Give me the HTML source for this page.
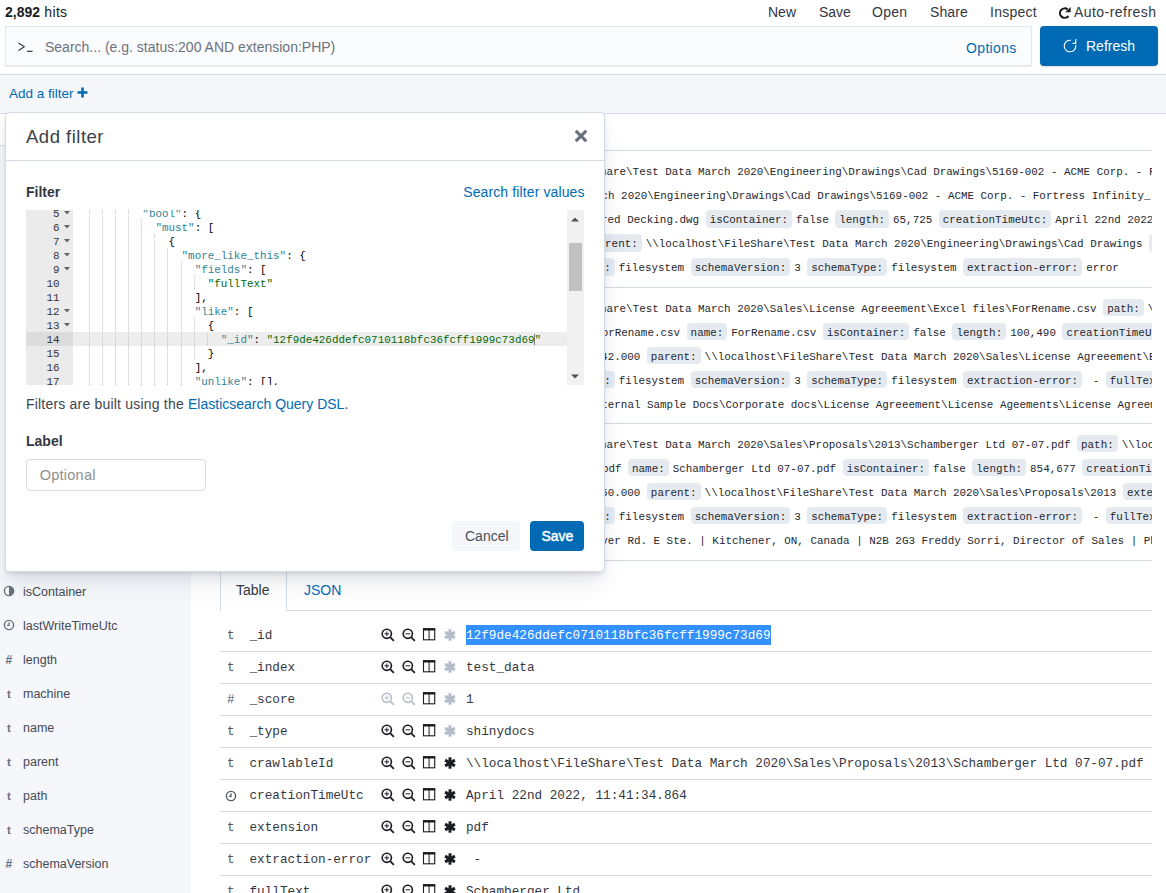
<!DOCTYPE html>
<html><head><meta charset="utf-8">
<style>
*{box-sizing:border-box;margin:0;padding:0}
html,body{width:1166px;height:893px;overflow:hidden;background:#fff}
body{font-family:"Liberation Sans",sans-serif;color:#343741;position:relative}
.abs{position:absolute}
.mono{font-family:"Liberation Mono",monospace}
.nw{white-space:nowrap}
.link{color:#006bb4}
/* top */
#hits{left:5px;top:2px;font-size:14px;line-height:20px;color:#1a1c21}
#menu span{position:absolute;top:2px;font-size:14px;line-height:20px;color:#343741}
#search{left:5px;top:26px;width:1027px;height:40px;background:#fbfcfd;border:1px solid #e2e6ee;box-shadow:0 1px 1px rgba(0,0,0,.06)}
#refresh{left:1040px;top:26px;width:118px;height:40px;background:#006bb4;border-radius:4px;box-shadow:0 1px 2px rgba(0,0,0,.15)}
#fband{left:0;top:74px;width:1166px;height:40px;background:#f5f7fa;border-top:1px solid #d3dae6;border-bottom:1px solid #d3dae6}
#sidebar{left:0;top:114px;width:191px;height:779px;background:#f5f7fa}
/* doc table */
#doctable{left:191px;top:113px;width:961px;height:448px;overflow:hidden}
.hl{position:absolute;left:0;height:1px;background:#d3dae6}
.dl{position:absolute;white-space:nowrap;font-family:"Liberation Mono",monospace;font-size:10.9px;line-height:24px;color:#25272e}
.dl b{font-weight:normal;background:#e5eaf1;padding:3.9px 4px 1.7px;margin-right:4px;border-radius:4px}
/* modal */
#modal{left:5px;top:112px;width:600px;height:460px;background:#fff;border:1px solid #d3dae6;border-radius:4px;box-shadow:0 14px 24px -4px rgba(65,78,101,.12),0 6px 10px -2px rgba(65,78,101,.1),0 2px 3px 0 rgba(65,78,101,.08)}
.ln{position:absolute;left:0;white-space:pre;font-family:"Liberation Mono",monospace;font-size:10.9px;line-height:14px;color:#000}
.ln .k{color:#318495}.ln .s{color:#036a07}
.gn{position:absolute;right:13.5px;font-family:"Liberation Mono",monospace;font-size:10.9px;line-height:14px;color:#333}
.fw{position:absolute;left:38px}
.guides i{position:absolute;width:1px;height:14px;background:repeating-linear-gradient(#c4c4c4 0 1px,transparent 1px 2px)}
.sf{position:absolute;left:23px;font-size:12.5px;line-height:16px;color:#454a55;white-space:nowrap}
.sic{position:absolute;font-family:"Liberation Sans",sans-serif;font-size:12px;line-height:16px;color:#69707d}
.dt{position:absolute;white-space:pre;font-family:"Liberation Mono",monospace;font-size:12.7px;line-height:20px;color:#343741}
</style></head>
<body>
<div id="hits" class="abs"><b>2,892</b><span style="letter-spacing:0.35px"> hits</span></div>
<div id="menu">
<span style="left:768px">New</span>
<span style="left:819px">Save</span>
<span style="left:872px;letter-spacing:0.3px">Open</span>
<span style="left:930px;letter-spacing:0.1px">Share</span>
<span style="left:990px;letter-spacing:0.25px">Inspect</span>
<span style="left:1074px;letter-spacing:0.45px">Auto-refresh</span>
<svg class="abs" style="left:1058px;top:5.5px" width="14" height="14" viewBox="0 0 14 14"><path d="M9.6 3.4 A4.7 4.7 0 1 0 10.4 10.0" fill="none" stroke="#1a1c21" stroke-width="2.1"/><path d="M12.6 0.9 L12.6 6.3 L7.2 6.3 Z" fill="#1a1c21"/></svg>
</div>
<div id="search" class="abs">
<svg class="abs" style="left:11px;top:15px" width="18" height="12" viewBox="0 0 18 12"><path d="M1.5 1 L7.3 4.8 L1.5 8.6" fill="none" stroke="#343741" stroke-width="1.15"/><path d="M10 9.3 H15.6" stroke="#343741" stroke-width="1.2"/></svg>
<div class="abs nw" style="left:39px;top:10px;font-size:14px;line-height:20px;color:#6c727d">Search... (e.g. status:200 AND extension:PHP)</div>
<div class="abs nw link" style="left:960px;top:11px;font-size:14px;line-height:20px;letter-spacing:0.35px">Options</div>
</div>
<div id="refresh" class="abs">
<svg class="abs" style="left:23px;top:12.3px" width="15" height="15" viewBox="0 0 15 15"><path d="M8.0 2.29 A5.8 5.8 0 1 0 12.71 6.99" fill="none" stroke="#fff" stroke-width="1.1"/><path d="M12.8 1 V5.4 H9.6" fill="none" stroke="#fff" stroke-width="1.1"/></svg>
<div class="abs nw" style="left:46px;top:10px;font-size:14px;line-height:20px;color:#fff">Refresh</div>
</div>
<div id="fband" class="abs">
<div class="abs nw link" style="left:9px;top:9.8px;font-size:13.5px;line-height:18px">Add a filter</div>
<svg class="abs" style="left:77px;top:12px" width="11" height="11" viewBox="0 0 11 11"><path d="M5.5 0.5 V10.5 M0.5 5.5 H10.5" stroke="#006bb4" stroke-width="2.6"/></svg>
</div>
<div id="sidebar" class="abs"><div class="abs" style="left:0;top:0;width:191px;height:32px;background:#fff;border-bottom:1px solid #d3dae6"></div><div class="sf" style="top:469.7px">isContainer</div><svg class="abs" style="left:3px;top:471.30000000000007px" width="12" height="12" viewBox="0 0 12 12"><circle cx="6" cy="6" r="4.6" fill="none" stroke="#69707d" stroke-width="1.4"/><path d="M6 1.4A4.6 4.6 0 0 1 6 10.6Z" fill="#69707d"/></svg><div class="sf" style="top:503.7px">lastWriteTimeUtc</div><svg class="abs" style="left:3px;top:505.30000000000007px" width="12" height="12" viewBox="0 0 12 12"><circle cx="6" cy="6" r="4.6" fill="none" stroke="#69707d" stroke-width="1.4"/><path d="M6 3.2V6.3H4" fill="none" stroke="#69707d" stroke-width="1.3"/></svg><div class="sf" style="top:537.7px">length</div><div class="sic" style="top:537.7px;left:5.5px;font-weight:bold">#</div><div class="sf" style="top:571.7px">machine</div><div class="sic" style="top:571.7px;left:7px;font-weight:bold;font-size:11.5px">t</div><div class="sf" style="top:605.7px">name</div><div class="sic" style="top:605.7px;left:7px;font-weight:bold;font-size:11.5px">t</div><div class="sf" style="top:639.7px">parent</div><div class="sic" style="top:639.7px;left:7px;font-weight:bold;font-size:11.5px">t</div><div class="sf" style="top:673.7px">path</div><div class="sic" style="top:673.7px;left:7px;font-weight:bold;font-size:11.5px">t</div><div class="sf" style="top:707.7px">schemaType</div><div class="sic" style="top:707.7px;left:7px;font-weight:bold;font-size:11.5px">t</div><div class="sf" style="top:741.7px">schemaVersion</div><div class="sic" style="top:741.7px;left:5.5px;font-weight:bold">#</div><div class="sf" style="top:775.7px">sourceId</div><div class="sic" style="top:775.7px;left:7px;font-weight:bold;font-size:11.5px">t</div></div>
<div id="doctable" class="abs"><div class="hl" style="left:29px;top:37px;width:932px"></div>
<div class="hl" style="left:29px;top:174px;width:932px"></div>
<div class="hl" style="left:29px;top:310px;width:932px"></div>
<div class="hl" style="left:29px;top:447px;width:932px"></div>
<div class="dl" style="left:408.95px;top:47.1px">hare\Test Data March 2020\Engineering\Drawings\Cad Drawings\5169-002 - ACME Corp. - Fortress Infinity_Weathered Decking.dwg</div>
<div class="dl" style="left:390.90px;top:71.1px">March 2020\Engineering\Drawings\Cad Drawings\5169-002 - ACME Corp. - Fortress Infinity_</div>
<div class="dl" style="left:410.05px;top:95.1px">red Decking.dwg <b>isContainer:</b>false <b>length:</b>65,725 <b>creationTimeUtc:</b>April 22nd 2022, 11:41:32.000</div>
<div class="dl" style="left:397.00px;top:119.1px"><b>parent:</b>\\localhost\FileShare\Test Data March 2020\Engineering\Drawings\Cad Drawings <b>extension:</b>dwg</div>
<div class="dl" style="left:363.50px;top:143.1px"><b>machine:</b>filesystem <b>schemaVersion:</b>3 <b>schemaType:</b>filesystem <b>extraction-error:</b>error</div>
<div class="dl" style="left:408.95px;top:183.8px">hare\Test Data March 2020\Sales\License Agreeement\Excel files\ForRename.csv <b>path:</b>\\localhost\FileShare</div>
<div class="dl" style="left:404.10px;top:207.8px">ForRename.csv <b>name:</b>ForRename.csv <b>isContainer:</b>false <b>length:</b>100,490 <b>creationTimeUtc:</b>April 22nd</div>
<div class="dl" style="left:370.90px;top:231.8px">11:41:42.000 <b>parent:</b>\\localhost\FileShare\Test Data March 2020\Sales\License Agreeement\Excel files</div>
<div class="dl" style="left:363.50px;top:255.8px"><b>machine:</b>filesystem <b>schemaVersion:</b>3 <b>schemaType:</b>filesystem <b>extraction-error:</b> - <b>fullText:</b>External</div>
<div class="dl" style="left:397.20px;top:279.8px">External Sample Docs\Corporate docs\License Agreeement\License Ageements\License Agreement.docx</div>
<div class="dl" style="left:408.95px;top:319.8px">hare\Test Data March 2020\Sales\Proposals\2013\Schamberger Ltd 07-07.pdf <b>path:</b>\\localhost\FileShare</div>
<div class="dl" style="left:371.70px;top:343.8px">07-07.pdf <b>name:</b>Schamberger Ltd 07-07.pdf <b>isContainer:</b>false <b>length:</b>854,677 <b>creationTimeUtc:</b>April</div>
<div class="dl" style="left:370.90px;top:367.8px">11:41:50.000 <b>parent:</b>\\localhost\FileShare\Test Data March 2020\Sales\Proposals\2013 <b>extension:</b>pdf</div>
<div class="dl" style="left:363.50px;top:391.8px"><b>machine:</b>filesystem <b>schemaVersion:</b>3 <b>schemaType:</b>filesystem <b>extraction-error:</b> - <b>fullText:</b>Schamberger</div>
<div class="dl" style="left:397.20px;top:415.8px">River Rd. E Ste. | Kitchener, ON, Canada | N2B 2G3 Freddy Sorri, Director of Sales | Phone: 519</div></div>
<div id="details"><div class="abs" style="left:220px;top:560px;width:67px;height:51px;border:1px solid #d3dae6;border-bottom:none;background:#fff"></div><div class="abs" style="left:286px;top:610px;width:866px;height:1px;background:#d3dae6"></div><div class="abs nw" style="left:236px;top:579.9px;font-size:14px;line-height:20px;color:#343741">Table</div><div class="abs nw link" style="left:304px;top:579.9px;font-size:14px;line-height:20px">JSON</div><div class="abs" style="left:220px;top:651px;width:932px;height:1px;background:#d3dae6"></div><div class="dt" style="left:227px;top:626.1px;color:#535966">t</div><div class="dt" style="left:249.5px;top:626.1px">_id</div><svg class="abs" style="left:381px;top:628.1px" width="14" height="14" viewBox="0 0 14 14"><circle cx="5.8" cy="5.8" r="4.6" fill="none" stroke="#1a1c21" stroke-width="1.6"/><path d="M9.2 9.2L12.8 12.8" stroke="#1a1c21" stroke-width="1.8"/><path d="M5.8 3.5V8.1M3.5 5.8H8.1" stroke="#1a1c21" stroke-width="1"/></svg><svg class="abs" style="left:401.5px;top:628.1px" width="14" height="14" viewBox="0 0 14 14"><circle cx="5.8" cy="5.8" r="4.6" fill="none" stroke="#1a1c21" stroke-width="1.6"/><path d="M9.2 9.2L12.8 12.8" stroke="#1a1c21" stroke-width="1.8"/><path d="M3.5 5.8H8.1" stroke="#1a1c21" stroke-width="1"/></svg><svg class="abs" style="left:422.3px;top:628.3000000000001px" width="14" height="13" viewBox="0 0 14 13"><rect x="1.5" y="1.2" width="11.2" height="10.6" fill="none" stroke="#1a1c21" stroke-width="1.1"/><path d="M0.95 1.3H13.25" stroke="#1a1c21" stroke-width="2.4"/><path d="M7.1 1V12" stroke="#1a1c21" stroke-width="1"/></svg><svg class="abs" style="left:443.5px;top:628.6px" width="12" height="12" viewBox="0 0 12 12"><g stroke="#b4bcc9" stroke-width="3" stroke-linecap="butt"><path d="M6 0.3V11.7"/><path d="M1.1 3.15L10.9 8.85"/><path d="M1.1 8.85L10.9 3.15"/></g></svg><div class="abs" style="left:466px;top:625px;width:305px;height:20px;background:#3390ff"></div><div class="dt" style="left:466px;top:626.1px;color:#fff">12f9de426ddefc0710118bfc36fcff1999c73d69</div><div class="abs" style="left:220px;top:683px;width:932px;height:1px;background:#d3dae6"></div><div class="dt" style="left:227px;top:658.1px;color:#535966">t</div><div class="dt" style="left:249.5px;top:658.1px">_index</div><svg class="abs" style="left:381px;top:660.1px" width="14" height="14" viewBox="0 0 14 14"><circle cx="5.8" cy="5.8" r="4.6" fill="none" stroke="#1a1c21" stroke-width="1.6"/><path d="M9.2 9.2L12.8 12.8" stroke="#1a1c21" stroke-width="1.8"/><path d="M5.8 3.5V8.1M3.5 5.8H8.1" stroke="#1a1c21" stroke-width="1"/></svg><svg class="abs" style="left:401.5px;top:660.1px" width="14" height="14" viewBox="0 0 14 14"><circle cx="5.8" cy="5.8" r="4.6" fill="none" stroke="#1a1c21" stroke-width="1.6"/><path d="M9.2 9.2L12.8 12.8" stroke="#1a1c21" stroke-width="1.8"/><path d="M3.5 5.8H8.1" stroke="#1a1c21" stroke-width="1"/></svg><svg class="abs" style="left:422.3px;top:660.3000000000001px" width="14" height="13" viewBox="0 0 14 13"><rect x="1.5" y="1.2" width="11.2" height="10.6" fill="none" stroke="#1a1c21" stroke-width="1.1"/><path d="M0.95 1.3H13.25" stroke="#1a1c21" stroke-width="2.4"/><path d="M7.1 1V12" stroke="#1a1c21" stroke-width="1"/></svg><svg class="abs" style="left:443.5px;top:660.6px" width="12" height="12" viewBox="0 0 12 12"><g stroke="#b4bcc9" stroke-width="3" stroke-linecap="butt"><path d="M6 0.3V11.7"/><path d="M1.1 3.15L10.9 8.85"/><path d="M1.1 8.85L10.9 3.15"/></g></svg><div class="dt" style="left:466px;top:658.1px">test_data</div><div class="abs" style="left:220px;top:715px;width:932px;height:1px;background:#d3dae6"></div><div class="dt" style="left:227px;top:690.1px;color:#535966">#</div><div class="dt" style="left:249.5px;top:690.1px">_score</div><svg class="abs" style="left:381px;top:692.1px" width="14" height="14" viewBox="0 0 14 14"><circle cx="5.8" cy="5.8" r="4.6" fill="none" stroke="#b8bec8" stroke-width="1.6"/><path d="M9.2 9.2L12.8 12.8" stroke="#b8bec8" stroke-width="1.8"/><path d="M5.8 3.5V8.1M3.5 5.8H8.1" stroke="#b8bec8" stroke-width="1"/></svg><svg class="abs" style="left:401.5px;top:692.1px" width="14" height="14" viewBox="0 0 14 14"><circle cx="5.8" cy="5.8" r="4.6" fill="none" stroke="#b8bec8" stroke-width="1.6"/><path d="M9.2 9.2L12.8 12.8" stroke="#b8bec8" stroke-width="1.8"/><path d="M3.5 5.8H8.1" stroke="#b8bec8" stroke-width="1"/></svg><svg class="abs" style="left:422.3px;top:692.3000000000001px" width="14" height="13" viewBox="0 0 14 13"><rect x="1.5" y="1.2" width="11.2" height="10.6" fill="none" stroke="#1a1c21" stroke-width="1.1"/><path d="M0.95 1.3H13.25" stroke="#1a1c21" stroke-width="2.4"/><path d="M7.1 1V12" stroke="#1a1c21" stroke-width="1"/></svg><svg class="abs" style="left:443.5px;top:692.6px" width="12" height="12" viewBox="0 0 12 12"><g stroke="#b4bcc9" stroke-width="3" stroke-linecap="butt"><path d="M6 0.3V11.7"/><path d="M1.1 3.15L10.9 8.85"/><path d="M1.1 8.85L10.9 3.15"/></g></svg><div class="dt" style="left:466px;top:690.1px">1</div><div class="abs" style="left:220px;top:747px;width:932px;height:1px;background:#d3dae6"></div><div class="dt" style="left:227px;top:722.1px;color:#535966">t</div><div class="dt" style="left:249.5px;top:722.1px">_type</div><svg class="abs" style="left:381px;top:724.1px" width="14" height="14" viewBox="0 0 14 14"><circle cx="5.8" cy="5.8" r="4.6" fill="none" stroke="#1a1c21" stroke-width="1.6"/><path d="M9.2 9.2L12.8 12.8" stroke="#1a1c21" stroke-width="1.8"/><path d="M5.8 3.5V8.1M3.5 5.8H8.1" stroke="#1a1c21" stroke-width="1"/></svg><svg class="abs" style="left:401.5px;top:724.1px" width="14" height="14" viewBox="0 0 14 14"><circle cx="5.8" cy="5.8" r="4.6" fill="none" stroke="#1a1c21" stroke-width="1.6"/><path d="M9.2 9.2L12.8 12.8" stroke="#1a1c21" stroke-width="1.8"/><path d="M3.5 5.8H8.1" stroke="#1a1c21" stroke-width="1"/></svg><svg class="abs" style="left:422.3px;top:724.3000000000001px" width="14" height="13" viewBox="0 0 14 13"><rect x="1.5" y="1.2" width="11.2" height="10.6" fill="none" stroke="#1a1c21" stroke-width="1.1"/><path d="M0.95 1.3H13.25" stroke="#1a1c21" stroke-width="2.4"/><path d="M7.1 1V12" stroke="#1a1c21" stroke-width="1"/></svg><svg class="abs" style="left:443.5px;top:724.6px" width="12" height="12" viewBox="0 0 12 12"><g stroke="#b4bcc9" stroke-width="3" stroke-linecap="butt"><path d="M6 0.3V11.7"/><path d="M1.1 3.15L10.9 8.85"/><path d="M1.1 8.85L10.9 3.15"/></g></svg><div class="dt" style="left:466px;top:722.1px">shinydocs</div><div class="abs" style="left:220px;top:779px;width:932px;height:1px;background:#d3dae6"></div><div class="dt" style="left:227px;top:754.1px;color:#535966">t</div><div class="dt" style="left:249.5px;top:754.1px">crawlableId</div><svg class="abs" style="left:381px;top:756.1px" width="14" height="14" viewBox="0 0 14 14"><circle cx="5.8" cy="5.8" r="4.6" fill="none" stroke="#1a1c21" stroke-width="1.6"/><path d="M9.2 9.2L12.8 12.8" stroke="#1a1c21" stroke-width="1.8"/><path d="M5.8 3.5V8.1M3.5 5.8H8.1" stroke="#1a1c21" stroke-width="1"/></svg><svg class="abs" style="left:401.5px;top:756.1px" width="14" height="14" viewBox="0 0 14 14"><circle cx="5.8" cy="5.8" r="4.6" fill="none" stroke="#1a1c21" stroke-width="1.6"/><path d="M9.2 9.2L12.8 12.8" stroke="#1a1c21" stroke-width="1.8"/><path d="M3.5 5.8H8.1" stroke="#1a1c21" stroke-width="1"/></svg><svg class="abs" style="left:422.3px;top:756.3000000000001px" width="14" height="13" viewBox="0 0 14 13"><rect x="1.5" y="1.2" width="11.2" height="10.6" fill="none" stroke="#1a1c21" stroke-width="1.1"/><path d="M0.95 1.3H13.25" stroke="#1a1c21" stroke-width="2.4"/><path d="M7.1 1V12" stroke="#1a1c21" stroke-width="1"/></svg><svg class="abs" style="left:443.5px;top:756.6px" width="12" height="12" viewBox="0 0 12 12"><g stroke="#1a1c21" stroke-width="3" stroke-linecap="butt"><path d="M6 0.3V11.7"/><path d="M1.1 3.15L10.9 8.85"/><path d="M1.1 8.85L10.9 3.15"/></g></svg><div class="dt" style="left:466px;top:754.1px">\\localhost\FileShare\Test Data March 2020\Sales\Proposals\2013\Schamberger Ltd 07-07.pdf</div><div class="abs" style="left:220px;top:811px;width:932px;height:1px;background:#d3dae6"></div><svg class="abs" style="left:224.5px;top:789.5px" width="12" height="12" viewBox="0 0 12 12"><circle cx="6" cy="6" r="4.6" fill="none" stroke="#535966" stroke-width="1.4"/><path d="M6 3.2V6.3H4" fill="none" stroke="#535966" stroke-width="1.3"/></svg><div class="dt" style="left:249.5px;top:786.1px">creationTimeUtc</div><svg class="abs" style="left:381px;top:788.1px" width="14" height="14" viewBox="0 0 14 14"><circle cx="5.8" cy="5.8" r="4.6" fill="none" stroke="#1a1c21" stroke-width="1.6"/><path d="M9.2 9.2L12.8 12.8" stroke="#1a1c21" stroke-width="1.8"/><path d="M5.8 3.5V8.1M3.5 5.8H8.1" stroke="#1a1c21" stroke-width="1"/></svg><svg class="abs" style="left:401.5px;top:788.1px" width="14" height="14" viewBox="0 0 14 14"><circle cx="5.8" cy="5.8" r="4.6" fill="none" stroke="#1a1c21" stroke-width="1.6"/><path d="M9.2 9.2L12.8 12.8" stroke="#1a1c21" stroke-width="1.8"/><path d="M3.5 5.8H8.1" stroke="#1a1c21" stroke-width="1"/></svg><svg class="abs" style="left:422.3px;top:788.3000000000001px" width="14" height="13" viewBox="0 0 14 13"><rect x="1.5" y="1.2" width="11.2" height="10.6" fill="none" stroke="#1a1c21" stroke-width="1.1"/><path d="M0.95 1.3H13.25" stroke="#1a1c21" stroke-width="2.4"/><path d="M7.1 1V12" stroke="#1a1c21" stroke-width="1"/></svg><svg class="abs" style="left:443.5px;top:788.6px" width="12" height="12" viewBox="0 0 12 12"><g stroke="#1a1c21" stroke-width="3" stroke-linecap="butt"><path d="M6 0.3V11.7"/><path d="M1.1 3.15L10.9 8.85"/><path d="M1.1 8.85L10.9 3.15"/></g></svg><div class="dt" style="left:466px;top:786.1px">April 22nd 2022, 11:41:34.864</div><div class="abs" style="left:220px;top:843px;width:932px;height:1px;background:#d3dae6"></div><div class="dt" style="left:227px;top:818.1px;color:#535966">t</div><div class="dt" style="left:249.5px;top:818.1px">extension</div><svg class="abs" style="left:381px;top:820.1px" width="14" height="14" viewBox="0 0 14 14"><circle cx="5.8" cy="5.8" r="4.6" fill="none" stroke="#1a1c21" stroke-width="1.6"/><path d="M9.2 9.2L12.8 12.8" stroke="#1a1c21" stroke-width="1.8"/><path d="M5.8 3.5V8.1M3.5 5.8H8.1" stroke="#1a1c21" stroke-width="1"/></svg><svg class="abs" style="left:401.5px;top:820.1px" width="14" height="14" viewBox="0 0 14 14"><circle cx="5.8" cy="5.8" r="4.6" fill="none" stroke="#1a1c21" stroke-width="1.6"/><path d="M9.2 9.2L12.8 12.8" stroke="#1a1c21" stroke-width="1.8"/><path d="M3.5 5.8H8.1" stroke="#1a1c21" stroke-width="1"/></svg><svg class="abs" style="left:422.3px;top:820.3000000000001px" width="14" height="13" viewBox="0 0 14 13"><rect x="1.5" y="1.2" width="11.2" height="10.6" fill="none" stroke="#1a1c21" stroke-width="1.1"/><path d="M0.95 1.3H13.25" stroke="#1a1c21" stroke-width="2.4"/><path d="M7.1 1V12" stroke="#1a1c21" stroke-width="1"/></svg><svg class="abs" style="left:443.5px;top:820.6px" width="12" height="12" viewBox="0 0 12 12"><g stroke="#1a1c21" stroke-width="3" stroke-linecap="butt"><path d="M6 0.3V11.7"/><path d="M1.1 3.15L10.9 8.85"/><path d="M1.1 8.85L10.9 3.15"/></g></svg><div class="dt" style="left:466px;top:818.1px">pdf</div><div class="abs" style="left:220px;top:875px;width:932px;height:1px;background:#d3dae6"></div><div class="dt" style="left:227px;top:850.1px;color:#535966">t</div><div class="dt" style="left:249.5px;top:850.1px">extraction-error</div><svg class="abs" style="left:381px;top:852.1px" width="14" height="14" viewBox="0 0 14 14"><circle cx="5.8" cy="5.8" r="4.6" fill="none" stroke="#1a1c21" stroke-width="1.6"/><path d="M9.2 9.2L12.8 12.8" stroke="#1a1c21" stroke-width="1.8"/><path d="M5.8 3.5V8.1M3.5 5.8H8.1" stroke="#1a1c21" stroke-width="1"/></svg><svg class="abs" style="left:401.5px;top:852.1px" width="14" height="14" viewBox="0 0 14 14"><circle cx="5.8" cy="5.8" r="4.6" fill="none" stroke="#1a1c21" stroke-width="1.6"/><path d="M9.2 9.2L12.8 12.8" stroke="#1a1c21" stroke-width="1.8"/><path d="M3.5 5.8H8.1" stroke="#1a1c21" stroke-width="1"/></svg><svg class="abs" style="left:422.3px;top:852.3000000000001px" width="14" height="13" viewBox="0 0 14 13"><rect x="1.5" y="1.2" width="11.2" height="10.6" fill="none" stroke="#1a1c21" stroke-width="1.1"/><path d="M0.95 1.3H13.25" stroke="#1a1c21" stroke-width="2.4"/><path d="M7.1 1V12" stroke="#1a1c21" stroke-width="1"/></svg><svg class="abs" style="left:443.5px;top:852.6px" width="12" height="12" viewBox="0 0 12 12"><g stroke="#1a1c21" stroke-width="3" stroke-linecap="butt"><path d="M6 0.3V11.7"/><path d="M1.1 3.15L10.9 8.85"/><path d="M1.1 8.85L10.9 3.15"/></g></svg><div class="dt" style="left:466px;top:850.1px"> -</div><div class="dt" style="left:227px;top:882.1px;color:#535966">t</div><div class="dt" style="left:249.5px;top:882.1px">fullText</div><svg class="abs" style="left:381px;top:884.1px" width="14" height="14" viewBox="0 0 14 14"><circle cx="5.8" cy="5.8" r="4.6" fill="none" stroke="#1a1c21" stroke-width="1.6"/><path d="M9.2 9.2L12.8 12.8" stroke="#1a1c21" stroke-width="1.8"/><path d="M5.8 3.5V8.1M3.5 5.8H8.1" stroke="#1a1c21" stroke-width="1"/></svg><svg class="abs" style="left:401.5px;top:884.1px" width="14" height="14" viewBox="0 0 14 14"><circle cx="5.8" cy="5.8" r="4.6" fill="none" stroke="#1a1c21" stroke-width="1.6"/><path d="M9.2 9.2L12.8 12.8" stroke="#1a1c21" stroke-width="1.8"/><path d="M3.5 5.8H8.1" stroke="#1a1c21" stroke-width="1"/></svg><svg class="abs" style="left:422.3px;top:884.3000000000001px" width="14" height="13" viewBox="0 0 14 13"><rect x="1.5" y="1.2" width="11.2" height="10.6" fill="none" stroke="#1a1c21" stroke-width="1.1"/><path d="M0.95 1.3H13.25" stroke="#1a1c21" stroke-width="2.4"/><path d="M7.1 1V12" stroke="#1a1c21" stroke-width="1"/></svg><svg class="abs" style="left:443.5px;top:884.6px" width="12" height="12" viewBox="0 0 12 12"><g stroke="#1a1c21" stroke-width="3" stroke-linecap="butt"><path d="M6 0.3V11.7"/><path d="M1.1 3.15L10.9 8.85"/><path d="M1.1 8.85L10.9 3.15"/></g></svg><div class="dt" style="left:466px;top:882.1px">Schamberger Ltd</div></div>
<div id="modal" class="abs"><div class="abs" style="left:1px;top:1px;width:596px;height:456px">
<div class="abs nw" style="left:19px;top:11.6px;font-size:18.5px;line-height:22px;color:#3a3f4a;letter-spacing:0.5px">Add filter</div>
<svg class="abs" style="left:568px;top:16px" width="12" height="12" viewBox="0 0 12 12"><path d="M1.8 1.8L10.2 10.2M10.2 1.8L1.8 10.2" stroke="#69707d" stroke-width="3.1" stroke-linecap="square"/></svg>
<div class="abs" style="left:-1px;top:46px;width:598px;height:1px;background:#d3dae6"></div>
<div class="abs nw" style="left:19px;top:68.2px;font-size:14px;line-height:20px;font-weight:bold;color:#343741">Filter</div>
<div class="abs nw link" style="left:456.2px;top:68.2px;font-size:14px;line-height:20px;letter-spacing:0.12px">Search filter values</div>
<div class="abs" style="left:19px;top:96px;width:558px;height:175px;overflow:hidden">
<div class="abs" style="left:0;top:0;width:47px;height:175px;background:#ebebeb"></div>
<div class="abs" style="left:0;top:122px;width:47px;height:14px;background:#dcdcdc"></div>
<div class="abs" style="left:47px;top:122px;width:494px;height:14px;background:#ededed"></div>
<div class="abs" style="left:0;top:0;width:47px;height:175px"><div class="gn" style="top:-3.3px">5</div><svg class="fw" style="top:1px" width="6" height="4" viewBox="0 0 6 4"><path d="M0 0H6L3 3.5Z" fill="#666"/></svg><div class="gn" style="top:10.7px">6</div><svg class="fw" style="top:15px" width="6" height="4" viewBox="0 0 6 4"><path d="M0 0H6L3 3.5Z" fill="#666"/></svg><div class="gn" style="top:24.7px">7</div><svg class="fw" style="top:29px" width="6" height="4" viewBox="0 0 6 4"><path d="M0 0H6L3 3.5Z" fill="#666"/></svg><div class="gn" style="top:38.7px">8</div><svg class="fw" style="top:43px" width="6" height="4" viewBox="0 0 6 4"><path d="M0 0H6L3 3.5Z" fill="#666"/></svg><div class="gn" style="top:52.7px">9</div><svg class="fw" style="top:57px" width="6" height="4" viewBox="0 0 6 4"><path d="M0 0H6L3 3.5Z" fill="#666"/></svg><div class="gn" style="top:66.7px">10</div><div class="gn" style="top:80.7px">11</div><div class="gn" style="top:94.7px">12</div><svg class="fw" style="top:99px" width="6" height="4" viewBox="0 0 6 4"><path d="M0 0H6L3 3.5Z" fill="#666"/></svg><div class="gn" style="top:108.7px">13</div><svg class="fw" style="top:113px" width="6" height="4" viewBox="0 0 6 4"><path d="M0 0H6L3 3.5Z" fill="#666"/></svg><div class="gn" style="top:122.7px">14</div><div class="gn" style="top:136.7px">15</div><div class="gn" style="top:150.7px">16</div><div class="gn" style="top:164.7px">17</div></div>
<div class="abs guides" style="left:47px;top:0;width:494px;height:175px"><i style="left:16.07px;top:-4px"></i><i style="left:29.14px;top:-4px"></i><i style="left:42.21px;top:-4px"></i><i style="left:55.28px;top:-4px"></i><i style="left:16.07px;top:10px"></i><i style="left:29.14px;top:10px"></i><i style="left:42.21px;top:10px"></i><i style="left:55.28px;top:10px"></i><i style="left:68.35px;top:10px"></i><i style="left:16.07px;top:24px"></i><i style="left:29.14px;top:24px"></i><i style="left:42.21px;top:24px"></i><i style="left:55.28px;top:24px"></i><i style="left:68.35px;top:24px"></i><i style="left:81.42px;top:24px"></i><i style="left:16.07px;top:38px"></i><i style="left:29.14px;top:38px"></i><i style="left:42.21px;top:38px"></i><i style="left:55.28px;top:38px"></i><i style="left:68.35px;top:38px"></i><i style="left:81.42px;top:38px"></i><i style="left:94.49px;top:38px"></i><i style="left:16.07px;top:52px"></i><i style="left:29.14px;top:52px"></i><i style="left:42.21px;top:52px"></i><i style="left:55.28px;top:52px"></i><i style="left:68.35px;top:52px"></i><i style="left:81.42px;top:52px"></i><i style="left:94.49px;top:52px"></i><i style="left:107.56px;top:52px"></i><i style="left:16.07px;top:66px"></i><i style="left:29.14px;top:66px"></i><i style="left:42.21px;top:66px"></i><i style="left:55.28px;top:66px"></i><i style="left:68.35px;top:66px"></i><i style="left:81.42px;top:66px"></i><i style="left:94.49px;top:66px"></i><i style="left:107.56px;top:66px"></i><i style="left:120.63px;top:66px"></i><i style="left:16.07px;top:80px"></i><i style="left:29.14px;top:80px"></i><i style="left:42.21px;top:80px"></i><i style="left:55.28px;top:80px"></i><i style="left:68.35px;top:80px"></i><i style="left:81.42px;top:80px"></i><i style="left:94.49px;top:80px"></i><i style="left:107.56px;top:80px"></i><i style="left:16.07px;top:94px"></i><i style="left:29.14px;top:94px"></i><i style="left:42.21px;top:94px"></i><i style="left:55.28px;top:94px"></i><i style="left:68.35px;top:94px"></i><i style="left:81.42px;top:94px"></i><i style="left:94.49px;top:94px"></i><i style="left:107.56px;top:94px"></i><i style="left:16.07px;top:108px"></i><i style="left:29.14px;top:108px"></i><i style="left:42.21px;top:108px"></i><i style="left:55.28px;top:108px"></i><i style="left:68.35px;top:108px"></i><i style="left:81.42px;top:108px"></i><i style="left:94.49px;top:108px"></i><i style="left:107.56px;top:108px"></i><i style="left:120.63px;top:108px"></i><i style="left:16.07px;top:122px"></i><i style="left:29.14px;top:122px"></i><i style="left:42.21px;top:122px"></i><i style="left:55.28px;top:122px"></i><i style="left:68.35px;top:122px"></i><i style="left:81.42px;top:122px"></i><i style="left:94.49px;top:122px"></i><i style="left:107.56px;top:122px"></i><i style="left:120.63px;top:122px"></i><i style="left:133.70px;top:122px"></i><i style="left:16.07px;top:136px"></i><i style="left:29.14px;top:136px"></i><i style="left:42.21px;top:136px"></i><i style="left:55.28px;top:136px"></i><i style="left:68.35px;top:136px"></i><i style="left:81.42px;top:136px"></i><i style="left:94.49px;top:136px"></i><i style="left:107.56px;top:136px"></i><i style="left:120.63px;top:136px"></i><i style="left:16.07px;top:150px"></i><i style="left:29.14px;top:150px"></i><i style="left:42.21px;top:150px"></i><i style="left:55.28px;top:150px"></i><i style="left:68.35px;top:150px"></i><i style="left:81.42px;top:150px"></i><i style="left:94.49px;top:150px"></i><i style="left:107.56px;top:150px"></i><i style="left:16.07px;top:164px"></i><i style="left:29.14px;top:164px"></i><i style="left:42.21px;top:164px"></i><i style="left:55.28px;top:164px"></i><i style="left:68.35px;top:164px"></i><i style="left:81.42px;top:164px"></i><i style="left:94.49px;top:164px"></i><i style="left:107.56px;top:164px"></i></div>
<div class="abs" style="left:51px;top:0;width:490px;height:175px"><div class="ln" style="top:-3.3px">          <span class="k">"bool"</span><span class="p">: {</span></div><div class="ln" style="top:10.7px">            <span class="k">"must"</span><span class="p">: [</span></div><div class="ln" style="top:24.7px">              <span class="p">{</span></div><div class="ln" style="top:38.7px">                <span class="k">"more_like_this"</span><span class="p">: {</span></div><div class="ln" style="top:52.7px">                  <span class="k">"fields"</span><span class="p">: [</span></div><div class="ln" style="top:66.7px">                    <span class="s">"fullText"</span></div><div class="ln" style="top:80.7px">                  <span class="p">],</span></div><div class="ln" style="top:94.7px">                  <span class="k">"like"</span><span class="p">: [</span></div><div class="ln" style="top:108.7px">                    <span class="p">{</span></div><div class="ln" style="top:122.7px">                      <span class="k">"_id"</span><span class="p">: </span><span class="s">"12f9de426ddefc0710118bfc36fcff1999c73d69"</span></div><div class="ln" style="top:136.7px">                    <span class="p">}</span></div><div class="ln" style="top:150.7px">                  <span class="p">],</span></div><div class="ln" style="top:164.7px">                  <span class="k">"unlike"</span><span class="p">: [],</span></div></div>
<div class="abs" style="left:508.2px;top:123.5px;width:1px;height:11px;background:#7a7a7a"></div>
<div class="abs" style="left:541px;top:0;width:17px;height:175px;background:#f1f1f1"></div>
<div class="abs" style="left:543px;top:33px;width:13px;height:48px;background:#c1c1c1"></div>
<svg class="abs" style="left:545px;top:7px" width="8" height="5" viewBox="0 0 8 5"><path d="M0 4.5H8L4 0.5Z" fill="#505050"/></svg>
<svg class="abs" style="left:545px;top:164px" width="8" height="5" viewBox="0 0 8 5"><path d="M0 0.5H8L4 4.5Z" fill="#505050"/></svg>
</div>
<div class="abs nw" style="left:19px;top:280px;font-size:14px;line-height:20px;color:#404550"><span style="letter-spacing:0.2px">Filters are built using the </span><span class="link">Elasticsearch Query DSL</span>.</div>
<div class="abs nw" style="left:19px;top:317.2px;font-size:14px;line-height:20px;font-weight:bold;color:#343741">Label</div>
<div class="abs" style="left:19px;top:345px;width:180px;height:32px;border:1px solid #dcdcdc;border-radius:4px;background:#fff"></div>
<div class="abs nw" style="left:32.7px;top:351.2px;font-size:14.5px;line-height:20px;color:#8f8f8f;letter-spacing:0.25px">Optional</div>
<div class="abs" style="left:445px;top:407px;width:68px;height:30px;border-radius:4px;background:#f5f7fa"></div>
<div class="abs nw" style="left:458px;top:411.8px;font-size:14px;line-height:20px;color:#4a4f59">Cancel</div>
<div class="abs" style="left:523px;top:407px;width:54px;height:30px;border-radius:4px;background:#006bb4"></div>
<div class="abs nw" style="left:534.5px;top:411.8px;font-size:14px;line-height:20px;color:#fff;-webkit-text-stroke:0.45px #fff">Save</div>
</div></div>
</body></html>
